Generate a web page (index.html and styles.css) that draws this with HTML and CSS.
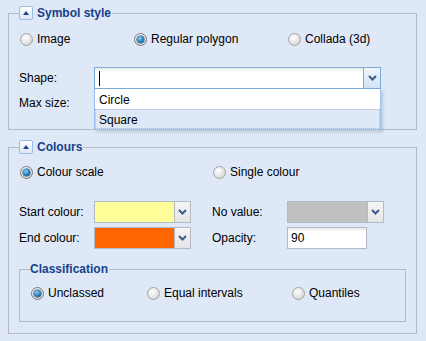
FILE: index.html
```html
<!DOCTYPE html>
<html lang="en">
<head>
    <meta charset="UTF-8">
    <title>Layer style</title>
    <link rel="stylesheet" href="styles.css">
</head>
<body>
    <div class="panel">
        <fieldset class="group">
            <legend><span class="toggle"></span>Symbol style</legend>
            <div class="radio-row">
                <label class="radio w114"><span class="dot"></span>Image</label>
                <label class="radio checked w154"><span class="dot"></span>Regular polygon</label>
                <label class="radio"><span class="dot"></span>Collada (3d)</label>
            </div>
            <div class="field-row shape-row">
                <span class="field-label">Shape:</span>
                <div class="combo focus">
                    <div class="combo-input"><span class="caret"></span></div>
                    <div class="trigger">
                        <svg width="9" height="6" viewBox="0 0 9 6"><polyline points="1,1 4.5,4.5 8,1" fill="none" stroke="#3b5a8c" stroke-width="2"/></svg>
                    </div>
                    <ul class="combo-list">
                        <li>Circle</li>
                        <li class="selected">Square</li>
                    </ul>
                </div>
            </div>
            <div class="field-row">
                <span class="field-label">Max size:</span>
            </div>
        </fieldset>

        <fieldset class="group colours">
            <legend><span class="toggle"></span>Colours</legend>
            <div class="radio-row">
                <label class="radio checked w193"><span class="dot"></span>Colour scale</label>
                <label class="radio"><span class="dot"></span>Single colour</label>
            </div>
            <div class="field-row start-row">
                <div class="field-col">
                    <span class="field-label">Start colour:</span>
                    <div class="swatch-combo">
                        <div class="swatch yellow"></div>
                        <div class="trigger">
                            <svg width="9" height="6" viewBox="0 0 9 6"><polyline points="1,1 4.5,4.5 8,1" fill="none" stroke="#3b5a8c" stroke-width="2"/></svg>
                        </div>
                    </div>
                </div>
                <div class="field-col">
                    <span class="field-label">No value:</span>
                    <div class="swatch-combo">
                        <div class="swatch grey"></div>
                        <div class="trigger">
                            <svg width="9" height="6" viewBox="0 0 9 6"><polyline points="1,1 4.5,4.5 8,1" fill="none" stroke="#3b5a8c" stroke-width="2"/></svg>
                        </div>
                    </div>
                </div>
            </div>
            <div class="field-row end-row">
                <div class="field-col">
                    <span class="field-label">End colour:</span>
                    <div class="swatch-combo">
                        <div class="swatch orange"></div>
                        <div class="trigger">
                            <svg width="9" height="6" viewBox="0 0 9 6"><polyline points="1,1 4.5,4.5 8,1" fill="none" stroke="#3b5a8c" stroke-width="2"/></svg>
                        </div>
                    </div>
                </div>
                <div class="field-col">
                    <span class="field-label">Opacity:</span>
                    <div class="text-input">90</div>
                </div>
            </div>

            <fieldset class="inner">
                <legend>Classification</legend>
                <div class="radio-row">
                    <label class="radio checked w116"><span class="dot"></span>Unclassed</label>
                    <label class="radio w145"><span class="dot"></span>Equal intervals</label>
                    <label class="radio"><span class="dot"></span>Quantiles</label>
                </div>
            </fieldset>
        </fieldset>
    </div>
</body>
</html>
```

FILE: styles.css
```css
/* Reset default margin and padding */
* {
    margin: 0;
    padding: 0;
    box-sizing: border-box;
}

body {
    font-family: "Liberation Sans", Arial, sans-serif;
    font-size: 12px;
    color: #000;
    background-color: #dfe8f6;
    width: 426px;
    height: 341px;
    overflow: hidden;
}

.panel {
    padding: 6px 9px 0 8px;
}

/* Fieldsets */
.group {
    border: 1px solid #b5b8c8;
    padding: 10px 10px 15px 10px;
    min-width: 0;
}

.group legend {
    display: flex;
    align-items: center;
    height: 14px;
    padding-right: 1px;
    font-weight: bold;
    color: #15428b;
}

.toggle {
    width: 14px;
    height: 14px;
    margin-right: 4px;
    border: 1px solid #99bbe8;
    border-radius: 2px;
    background: linear-gradient(#ffffff, #dce7f6);
    position: relative;
}

.toggle::after {
    content: "";
    position: absolute;
    left: 3px;
    top: 4px;
    border-left: 3.5px solid transparent;
    border-right: 3.5px solid transparent;
    border-bottom: 4px solid #15428b;
}

.colours {
    margin-top: 10px;
    padding: 9px 10px 11px 10px;
}

.inner {
    border: 1px solid #b5b8c8;
    margin-top: 13px;
    padding: 8px 10px 19px 10px;
    min-width: 0;
}

.inner legend {
    height: 14px;
    line-height: 14px;
    padding-right: 1px;
    font-weight: bold;
    color: #15428b;
}

/* Radios */
.radio-row {
    display: flex;
    height: 18px;
    align-items: center;
}

.radio {
    display: flex;
    align-items: center;
}

.w114 { width: 114px; }
.w154 { width: 154px; }
.w193 { width: 193px; }
.w116 { width: 116px; }
.w145 { width: 145px; }

.dot {
    width: 13px;
    height: 13px;
    margin: 0 4px 0 1px;
    border: 1px solid #a3a3a3;
    border-radius: 50%;
    background: radial-gradient(circle at 40% 35%, #ffffff 0, #e4e4e4 55%, #c4c4c4 100%);
    position: relative;
}

.checked .dot {
    border-color: #7a7a7a;
}

.checked .dot::after {
    content: "";
    position: absolute;
    left: 2px;
    top: 2px;
    width: 7px;
    height: 7px;
    border-radius: 50%;
    background: radial-gradient(circle at 40% 35%, #8fd0f5 0, #1f7fc0 55%, #0b3f70 100%);
    box-shadow: 0 0 0 0.5px #123a5e;
}

/* Field rows */
.field-row {
    display: flex;
    align-items: center;
    height: 22px;
    margin-top: 3px;
}

.shape-row {
    margin-top: 19px;
}

.start-row {
    margin-top: 20px;
}

.end-row {
    margin-top: 4px;
}

.field-label {
    width: 75px;
    flex-shrink: 0;
}

.field-col {
    display: flex;
    align-items: center;
    width: 193px;
}

/* Combo box */
.combo {
    display: flex;
    width: 287px;
    height: 22px;
    position: relative;
}

.combo-input {
    flex: 1;
    border: 1px solid #7eadd9;
    border-right: none;
    background: linear-gradient(#e9e9e9, #ffffff 4px);
    position: relative;
}

.caret {
    position: absolute;
    left: 4px;
    top: 3px;
    width: 1px;
    height: 15px;
    background: #000;
}

.trigger {
    width: 18px;
    border: 1px solid #b5b8c8;
    background: linear-gradient(#f7f7f7, #e4e4e4);
    display: flex;
    align-items: center;
    justify-content: center;
}

.focus .trigger {
    border-color: #7eadd9;
    background: linear-gradient(#eef4fb, #d4e3f4);
}

.combo-list {
    list-style: none;
    position: absolute;
    left: 0;
    top: 22px;
    width: 287px;
    height: 41px;
    border: 1px solid #98c0f4;
    border-top: none;
    background: #fff;
    box-shadow: 2px 2px 3px rgba(0, 0, 0, 0.15);
    z-index: 2;
}

.combo-list li {
    height: 20px;
    line-height: 18px;
    padding: 1px 3px 0 3px;
    border: 1px solid transparent;
}

.combo-list .selected {
    background: #dfe8f6;
    border: 1px dotted #a3bae9;
}

/* Colour pickers */
.swatch-combo {
    display: flex;
    width: 97px;
    height: 22px;
}

.swatch {
    flex: 1;
    border: 1px solid #b5b8c8;
    border-right: none;
}

.swatch-combo .trigger {
    width: 17px;
    background: linear-gradient(#f5f5f5, #e6e6e6);
}

.yellow { background: #ffff99; }
.orange { background: #ff6600; }
.grey { background: #c0c0c0; }

.text-input {
    width: 80px;
    height: 22px;
    line-height: 20px;
    padding-left: 3px;
    border: 1px solid #b5b8c8;
    background: linear-gradient(#e9e9e9, #ffffff 4px);
}
```
